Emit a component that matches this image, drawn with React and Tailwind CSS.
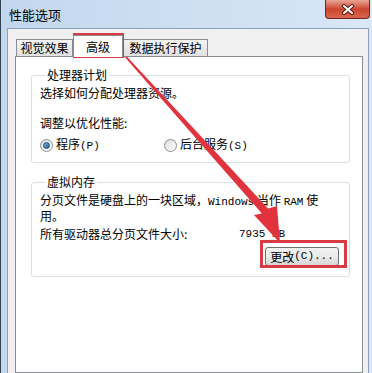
import React from "react";

const cjk = "font-['Noto_Sans_CJK_SC',sans-serif]";

const Latin = ({ children }) => (
  <span className="font-['Liberation_Mono',monospace] text-[11px]">{children}</span>
);

const Radio = ({ checked }) => (
  <span className="flex h-[13px] w-[13px] items-center justify-center rounded-full border border-[#8e8f8f] bg-gradient-to-br from-[#dcdcdc] to-[#ffffff]">
    {checked && (
      <span className="h-[7px] w-[7px] rounded-full border border-[#1d4f7c] bg-gradient-to-br from-[#7fb4e0] to-[#1f5a8e]"></span>
    )}
  </span>
);

const CloseButton = () => (
  <div className="mr-[2px] flex h-[19px] w-[45px] items-center justify-center rounded-b-[4px] border border-t-0 border-[#6e2a22] bg-gradient-to-b from-[#e9a596] via-[#c9462f] to-[#d9654c]">
    <svg width="14" height="11" viewBox="0 0 14 11">
      <path d="M3 2 L11 9 M11 2 L3 9" stroke="#5a1d16" strokeWidth="4" strokeLinecap="round" />
      <path d="M3 2 L11 9 M11 2 L3 9" stroke="#ffffff" strokeWidth="2" strokeLinecap="round" />
    </svg>
  </div>
);

const GroupBox = ({ title, className, children }) => (
  <fieldset className={`rounded-[3px] border border-[#d5dfe5] px-[8px] shadow-[1px_1px_0_#ffffff] ${className}`}>
    <legend className="ml-[5px] px-[2px] leading-[16px]">{title}</legend>
    {children}
  </fieldset>
);

export default function App() {
  return (
    <div className={`relative flex h-[373px] w-[372px] flex-col overflow-hidden border-l border-[#34414f] bg-gradient-to-r from-[#c2d7ee] to-[#d9e7f6] text-[12px] text-black ${cjk}`}>
      {/* title bar */}
      <div className="flex h-[28px] items-start justify-between">
        <div className="pl-[8px] pt-[6px] text-[13px] leading-[18px]">性能选项</div>
        <CloseButton />
      </div>

      {/* client area */}
      <div className="ml-[6px] mr-[3px] flex flex-1 flex-col border-l border-r border-t border-[#8da2b8] bg-[#f0f0f0] pl-[7px] pr-[5px]">
        <div className="flex h-[27px] items-end pl-[1px]">
          <div className="flex h-[17px] w-[57px] items-center justify-center border border-b-0 border-[#898c95] bg-gradient-to-b from-[#f4f4f4] to-[#e1e1e1]">
            视觉效果
          </div>
          <div className="relative z-10 mb-[-1px] flex h-[22px] w-[50px] items-center justify-center border border-b-0 border-[#898c95] bg-white">
            高级
          </div>
          <div className="flex h-[17px] w-[85px] items-center justify-center border border-b-0 border-[#898c95] bg-gradient-to-b from-[#f4f4f4] to-[#e1e1e1]">
            数据执行保护
          </div>
        </div>

        <div className="flex flex-1 flex-col border border-[#898c95] bg-white pl-[15px] pr-[12px] pt-[10px]">
          <GroupBox title="处理器计划" className="pb-[9px]">
            <p className="mt-[2px] leading-[16px]">选择如何分配处理器资源。</p>
            <p className="mt-[14px] leading-[16px]">调整以优化性能:</p>
            <div className="mt-[6px] flex h-[16px] items-center">
              <div className="flex w-[124px] items-center gap-[3px]">
                <Radio checked />
                <span>
                  程序<Latin>(P)</Latin>
                </span>
              </div>
              <div className="flex items-center gap-[3px]">
                <Radio />
                <span>
                  后台服务<Latin>(S)</Latin>
                </span>
              </div>
            </div>
          </GroupBox>

          <GroupBox title="虚拟内存" className="mt-[11px] pb-[10px]">
            <p className="mt-[3px] whitespace-nowrap leading-[13px]">
              分页文件是硬盘上的一块区域，<Latin>Windows</Latin> 当作 <Latin>RAM</Latin> 使
              <br />
              用。
            </p>
            <div className="mt-[4px] flex h-[16px] items-center">
              <span className="w-[199px]">所有驱动器总分页文件大小:</span>
              <Latin>7935 MB</Latin>
            </div>
            <div className="mt-[5px] flex justify-end">
              <button className="mr-[2px] flex h-[19px] w-[74px] items-center justify-center rounded-[3px] border border-[#707070] bg-gradient-to-b from-[#f2f2f2] via-[#ebebeb] to-[#d6d6d6]">
                更改<Latin>(C)...</Latin>
              </button>
            </div>
          </GroupBox>
        </div>
      </div>

      {/* annotations */}
      <div className="absolute left-[72px] top-[33px] h-[25px] w-[51px] border-[3px] border-[#d93a44]"></div>
      <div className="absolute left-[259px] top-[240px] h-[28px] w-[87px] border-[3px] border-[#d93a44]"></div>
      <svg className="pointer-events-none absolute left-0 top-0" width="372" height="373">
        <polygon
          points="125.8,56.4 267.1,208.5 276,206 279,243 253,215 260.9,213.5 124.2,57.6"
          fill="#e0333d"
        />
      </svg>
    </div>
  );
}
